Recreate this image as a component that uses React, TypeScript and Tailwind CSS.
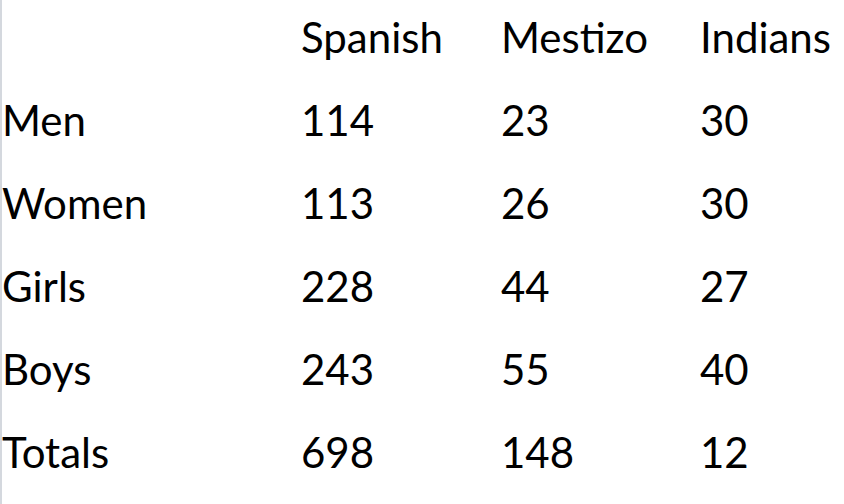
const columns = ['Spanish', 'Mestizo', 'Indians'];

const rows: [string, number, number, number][] = [
  ['Men', 114, 23, 30],
  ['Women', 113, 26, 30],
  ['Girls', 228, 44, 27],
  ['Boys', 243, 55, 40],
  ['Totals', 698, 148, 12],
];

export default function App() {
  return (
    <div
      className="w-[844px] h-[504px] overflow-hidden bg-white border-l-2 border-[#d4d8de] text-black text-[42px]"
      style={{ fontFamily: 'Lato, "Open Sans", sans-serif' }}
    >
      <div className="grid grid-cols-[299px_200px_199px_1fr] leading-[83px] -mt-[4px]">
        <div />
        {columns.map(c => (
          <div key={c}>{c}</div>
        ))}
        {rows.map(([label, a, b, c]) => (
          <div key={label} className="contents">
            <div>{label}</div>
            <div>{a}</div>
            <div>{b}</div>
            <div>{c}</div>
          </div>
        ))}
      </div>
    </div>
  );
}
